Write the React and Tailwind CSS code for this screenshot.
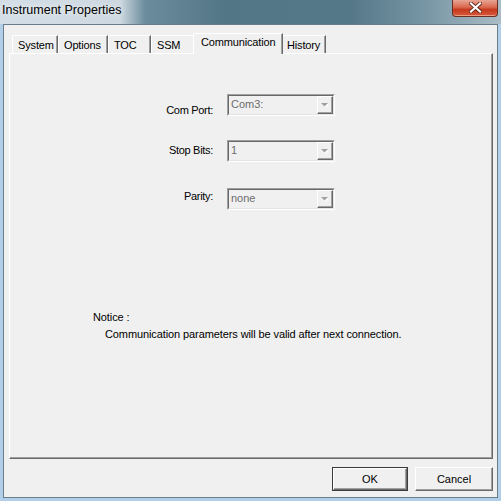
import React from 'react';

const FONT = "font-['Liberation_Sans',Arial,sans-serif]";

const tabs = [
  { label: 'System', w: 'w-[46px]' },
  { label: 'Options', w: 'w-[50px]' },
  { label: 'TOC', w: 'w-[43px]' },
  { label: 'SSM', w: 'w-[44px]' },
  { label: 'Communication', w: 'w-[90px]', active: true },
  { label: 'History', w: 'w-[45px]' },
];

function Tab({ label, w, active }) {
  if (active) {
    return (
      <div
        className={`relative z-10 -mx-[2px] -mb-px h-[21px] ${w} shrink-0 rounded-tl-[2px] border-t border-l border-r border-t-white border-l-white border-r-[#696969] bg-[#f0f0f0] pl-[7px] pt-[2px] text-[11px] leading-[13px] tracking-[-0.15px] text-black shadow-[inset_-1px_0_0_#a0a0a0]`}
      >
        {label}
      </div>
    );
  }
  return (
    <div
      className={`h-[18px] ${w} shrink-0 rounded-tl-[2px] border-t border-l border-r border-t-white border-l-white border-r-[#696969] bg-[#f0f0f0] pl-[5px] pt-[3px] text-[11px] leading-[13px] tracking-[-0.15px] text-black shadow-[inset_-1px_0_0_#a0a0a0]`}
    >
      {label}
    </div>
  );
}

// disabled combo box, sunken classic look
function Combo({ value }) {
  return (
    <div className="h-[22px] w-[108px] shrink-0 border border-t-[#a0a0a0] border-l-[#a0a0a0] border-r-white border-b-white">
      <div className="flex h-full border border-t-[#696969] border-l-[#696969] border-r-[#e3e3e3] border-b-[#e3e3e3] bg-[#f0f0f0]">
        <div className="flex-1 pl-[2px] pt-[2px] text-[11px] leading-[13px] text-[#6d6d6d]">{value}</div>
        <div className="flex h-full w-[16px] items-center justify-center border border-t-white border-l-white border-r-[#696969] border-b-[#696969] shadow-[inset_-1px_-1px_0_#a0a0a0]">
          <svg width="8" height="5" viewBox="0 0 8 5">
            <path d="M1 1h7L4.5 4.5z" fill="#ffffff" />
            <path d="M0 0h7L3.5 3.5z" fill="#a0a0a0" />
          </svg>
        </div>
      </div>
    </div>
  );
}

function Row({ label, value, labelTop, rowTop }) {
  return (
    <div className={`flex ${rowTop}`}>
      <div className={`w-[203px] shrink-0 text-right text-[11px] leading-[13px] tracking-[-0.3px] text-black ${labelTop}`}>{label}</div>
      <div className="w-[14px] shrink-0" />
      <Combo value={value} />
    </div>
  );
}

function Button({ children, isDefault }) {
  const face = (
    <div className="flex h-full items-center justify-center border border-t-white border-l-white border-r-[#696969] border-b-[#696969] bg-[#f0f0f0] text-[11px] text-black shadow-[inset_-1px_-1px_0_#a0a0a0]">
      {children}
    </div>
  );
  if (isDefault) {
    return <div className="h-[24px] w-[76px] border border-[#3c3c3c]">{face}</div>;
  }
  return <div className="h-[24px] w-[78px]">{face}</div>;
}

export default function App() {
  return (
    <div className={`flex h-[501px] w-[501px] flex-col overflow-hidden bg-[#b1cfe8] ${FONT}`}>
      {/* title bar */}
      <div className="flex h-[24px] shrink-0 items-start justify-between bg-[linear-gradient(90deg,#d4dee6_0%,#cdd8e0_24%,#6a8c9c_29%,#537687_45%,#557888_70%,#7896a5_85%,#aabcc6_100%)]">
        <div className="pl-[2px] pt-[3px] text-[12.5px] leading-[15px] text-black [text-shadow:0_0_6px_#ffffff]">
          Instrument Properties
        </div>
        <div className="mr-[3px] flex h-[17px] w-[46px] items-center justify-center rounded-b-[4px] border border-t-0 border-[#6b2e22] bg-[linear-gradient(180deg,#e9a595_0%,#d9684e_45%,#c73a1f_60%,#d6593a_100%)] shadow-[inset_0_-1px_0_rgba(255,200,180,0.6)]">
          <svg width="13" height="11" viewBox="0 0 13 11" className="-mt-[2px]">
            <path d="M2 1.5L11 9.5M11 1.5L2 9.5" stroke="#5a2418" strokeWidth="3.8" strokeLinecap="square" />
            <path d="M2 1.5L11 9.5M11 1.5L2 9.5" stroke="#ffffff" strokeWidth="2.2" strokeLinecap="square" />
          </svg>
        </div>
      </div>

      {/* client area */}
      <div className="mx-[3px] mb-[3px] flex flex-1 flex-col border border-[#6b7d89] bg-[#f0f0f0] pl-[5px] pr-[4px] pt-[8px] pb-[6px]">
        {/* tab strip */}
        <div className="flex h-[20px] shrink-0 items-end pl-[3px]">
          {tabs.map((t) => (
            <Tab key={t.label} {...t} />
          ))}
        </div>

        {/* tab page */}
        <div className="flex h-[406px] shrink-0 flex-col border border-t-white border-l-white border-r-[#696969] border-b-[#696969] pt-[40px] shadow-[inset_-1px_-1px_0_#a0a0a0]">
          <Row label="Com Port:" value="Com3:" labelTop="mt-[10px]" rowTop="" />
          <Row label="Stop Bits:" value="1" labelTop="mt-[4px]" rowTop="mt-[23px]" />
          <Row label="Parity:" value="none" labelTop="mt-[2px]" rowTop="mt-[26px]" />

          <div className="mt-[99px] pl-[83px] text-[11px] leading-[17px] tracking-[-0.1px] text-black">
            <div>Notice :</div>
            <div className="pl-[12px]">Communication parameters will be valid after next connection.</div>
          </div>
        </div>

        {/* buttons */}
        <div className="mt-[8px] flex justify-end gap-[7px]">
          <Button isDefault>OK</Button>
          <Button>Cancel</Button>
        </div>
      </div>
    </div>
  );
}
